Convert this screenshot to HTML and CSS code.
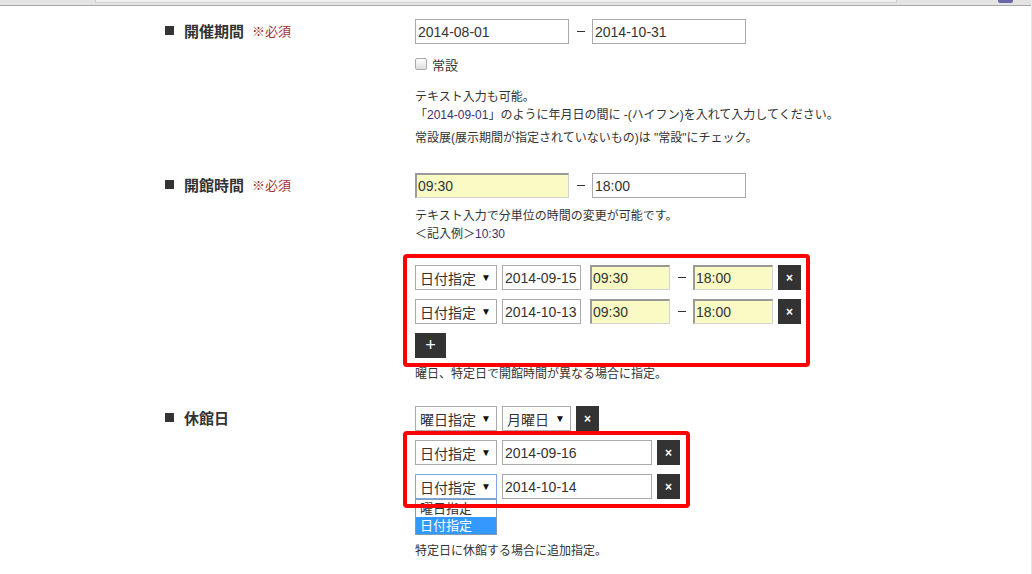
FILE: index.html
```html
<!DOCTYPE html>
<html>

<head>
    <meta charset="utf-8" />
    <title>開館情報の編集</title>
    <meta name="viewport" content="width=device-width, initial-scale=1">
    <link rel="stylesheet" href="styles.css">
</head>

<body>
    <div class="chrome">
        <div class="chrome-bar"></div>
        <div class="chrome-icon"></div>
    </div>

    <div class="form">

        <!-- 開催期間 -->
        <div class="row">
            <div class="label"><span class="sq"></span>開催期間<span class="req">※必須</span></div>
            <div class="field">
                <div class="line">
                    <input type="text" class="text w154" value="2014-08-01">
                    <span class="dash"></span>
                    <input type="text" class="text w154" value="2014-10-31">
                </div>
                <label class="check"><span class="box"></span>常設</label>
                <p class="note first">テキスト入力も可能。</p>
                <p class="note">「<span class="num">2014-09-01</span>」のように年月日の間に -(ハイフン)を入れて入力してください。</p>
                <p class="note gap">常設展(展示期間が指定されていないもの)は "常設"にチェック。</p>
            </div>
        </div>

        <!-- 開館時間 -->
        <div class="row">
            <div class="label"><span class="sq"></span>開館時間<span class="req">※必須</span></div>
            <div class="field">
                <div class="line">
                    <input type="text" class="text w154 hl" value="09:30">
                    <span class="dash"></span>
                    <input type="text" class="text w154" value="18:00">
                </div>
                <p class="note tight">テキスト入力で分単位の時間の変更が可能です。</p>
                <p class="note">＜記入例＞<span class="num">10:30</span></p>

                <div class="mark mark-a">
                    <div class="line">
                        <div class="select w82">日付指定<span class="arrow">▼</span></div>
                        <input type="text" class="text w79" value="2014-09-15">
                        <input type="text" class="text w80 hl sp" value="09:30">
                        <span class="dash"></span>
                        <input type="text" class="text w80 hl" value="18:00">
                        <button class="btn del">×</button>
                    </div>
                    <div class="line">
                        <div class="select w82">日付指定<span class="arrow">▼</span></div>
                        <input type="text" class="text w79" value="2014-10-13">
                        <input type="text" class="text w80 hl sp" value="09:30">
                        <span class="dash"></span>
                        <input type="text" class="text w80 hl" value="18:00">
                        <button class="btn del">×</button>
                    </div>
                    <div class="line">
                        <button class="btn add">+</button>
                    </div>
                </div>
                <p class="note after">曜日、特定日で開館時間が異なる場合に指定。</p>
            </div>
        </div>

        <!-- 休館日 -->
        <div class="row">
            <div class="label"><span class="sq"></span>休館日</div>
            <div class="field">
                <div class="line">
                    <div class="select w82">曜日指定<span class="arrow">▼</span></div>
                    <div class="select w69">月曜日<span class="arrow">▼</span></div>
                    <button class="btn del">×</button>
                </div>
                <div class="mark mark-b">
                    <div class="line">
                        <div class="select w82">日付指定<span class="arrow">▼</span></div>
                        <input type="text" class="text w150" value="2014-09-16">
                        <button class="btn del">×</button>
                    </div>
                    <div class="line">
                        <div class="select w82 open">日付指定<span class="arrow">▼</span>
                            <ul class="options">
                                <li>曜日指定</li>
                                <li class="on">日付指定</li>
                            </ul>
                        </div>
                        <input type="text" class="text w150" value="2014-10-14">
                        <button class="btn del">×</button>
                    </div>
                </div>
                <div class="line">
                    <button class="btn add">+</button>
                </div>
                <p class="note after">特定日に休館する場合に追加指定。</p>
            </div>
        </div>

    </div>
</body>

</html>
```

FILE: styles.css
```css
body {
    margin: 0;
    background: #fff;
    color: #333;
    font-family: "Liberation Sans", "Noto Sans CJK JP", sans-serif;
    border-right: 1px solid #e8e8e8;
    min-height: 574px;
    box-sizing: border-box;
}

.chrome {
    height: 5px;
    background: #e4e4e4;
    border-bottom: 1px solid #a8a8a8;
    position: relative;
}

.chrome-bar {
    margin-left: 95px;
    width: 800px;
    height: 2px;
    background: #f0f0f0;
    border: 1px solid #cfcfcf;
    border-top: none;
}

.chrome-icon {
    position: absolute;
    right: 18px;
    top: 0;
    width: 15px;
    height: 3px;
    background: #6a66a8;
    border-radius: 0 0 2px 2px;
}

.form {
    padding: 13px 0 0 165px;
}

.row {
    display: grid;
    grid-template-columns: 250px 1fr;
    margin-bottom: 26px;
}

.row:nth-child(2) {
    margin-bottom: 23px;
}

.label {
    display: flex;
    align-items: center;
    height: 22px;
    font-size: 15px;
    font-weight: bold;
    color: #333;
}

.sq {
    display: inline-block;
    width: 9px;
    height: 9px;
    background: #333;
    margin-right: 10px;
}

.req {
    font-size: 13px;
    font-weight: normal;
    color: #a33333;
    margin-left: 8px;
}

.line {
    display: flex;
    align-items: center;
    gap: 5px;
    margin-bottom: 9px;
}

.line:last-child {
    margin-bottom: 0;
}

.text {
    box-sizing: border-box;
    height: 25px;
    border: 1px solid #aaa;
    padding: 0 2px;
    font-family: "Liberation Sans", sans-serif;
    font-size: 14px;
    color: #333;
    background: #fff;
    outline: none;
}

.hl {
    background: #fafac4;
    border: 1px solid #d4d4d4;
    border-top: 2px solid #999;
    border-left: 2px solid #999;
    padding-left: 1px;
}

.w154 { width: 154px; }
.w150 { width: 150px; }
.w80 { width: 80px; }
.w79 { width: 79px; }
.w82 { width: 82px; }
.w69 { width: 69px; }

.sp {
    margin-left: 4px;
}

.dash {
    display: inline-block;
    width: 8px;
    height: 1px;
    background: #333;
    margin: 0 2px 0 3px;
}

.select {
    box-sizing: border-box;
    height: 25px;
    border: 1px solid #aaa;
    padding: 0 0 0 4px;
    font-size: 14px;
    display: flex;
    align-items: center;
    justify-content: space-between;
    background: #fff;
    position: relative;
}

.select .arrow {
    font-size: 10px;
    margin-right: 5px;
    color: #111;
}

.select.open {
    border-color: #7fa6e0;
}

.options {
    position: absolute;
    left: -1px;
    top: 24px;
    width: 82px;
    margin: 0;
    padding: 0;
    list-style: none;
    background: #fff;
    border: 1px solid #7f9db9;
    z-index: 1;
    box-sizing: border-box;
}

.options li {
    height: 17px;
    line-height: 17px;
    padding-left: 4px;
    font-size: 13px;
}

.options li.on {
    background: #3399ff;
    color: #fff;
}

.btn {
    border: none;
    background: #333;
    color: #fff;
    cursor: pointer;
    height: 25px;
    padding: 0;
    font-family: "Liberation Sans", sans-serif;
}

.del {
    width: 23px;
    font-size: 12px;
    font-weight: bold;
}

.add {
    width: 31px;
    font-size: 18px;
}

.check {
    display: flex;
    align-items: center;
    margin-top: 13px;
    font-size: 13px;
    height: 14px;
}

.box {
    display: inline-block;
    width: 10px;
    height: 10px;
    border: 1px solid #aaa;
    border-radius: 2px;
    background: linear-gradient(#fff, #ddd);
    margin-right: 5px;
}

.note {
    margin: 0;
    font-size: 12px;
    line-height: 18px;
}

.note.first {
    margin-top: 17px;
}

.note.gap {
    margin-top: 5px;
}

.note.tight {
    margin-top: 3px;
}

.num {
    font-family: "Liberation Sans", sans-serif;
    color: #3a3370;
}

.mark {
    position: relative;
    width: fit-content;
}

.mark::after {
    content: "";
    position: absolute;
    border: 4px solid #f00;
    border-radius: 4px;
    z-index: 2;
    pointer-events: none;
}

.mark-a {
    margin-top: 22px;
}

.mark-a::after {
    left: -12px;
    top: -11px;
    right: -9px;
    bottom: -9px;
}

.mark-b {
    margin-top: 9px;
    margin-bottom: 9px;
}

.mark-b::after {
    left: -12px;
    top: -9px;
    right: -10px;
    bottom: -9px;
}

.note.after {
    margin-top: 7px;
}
```
